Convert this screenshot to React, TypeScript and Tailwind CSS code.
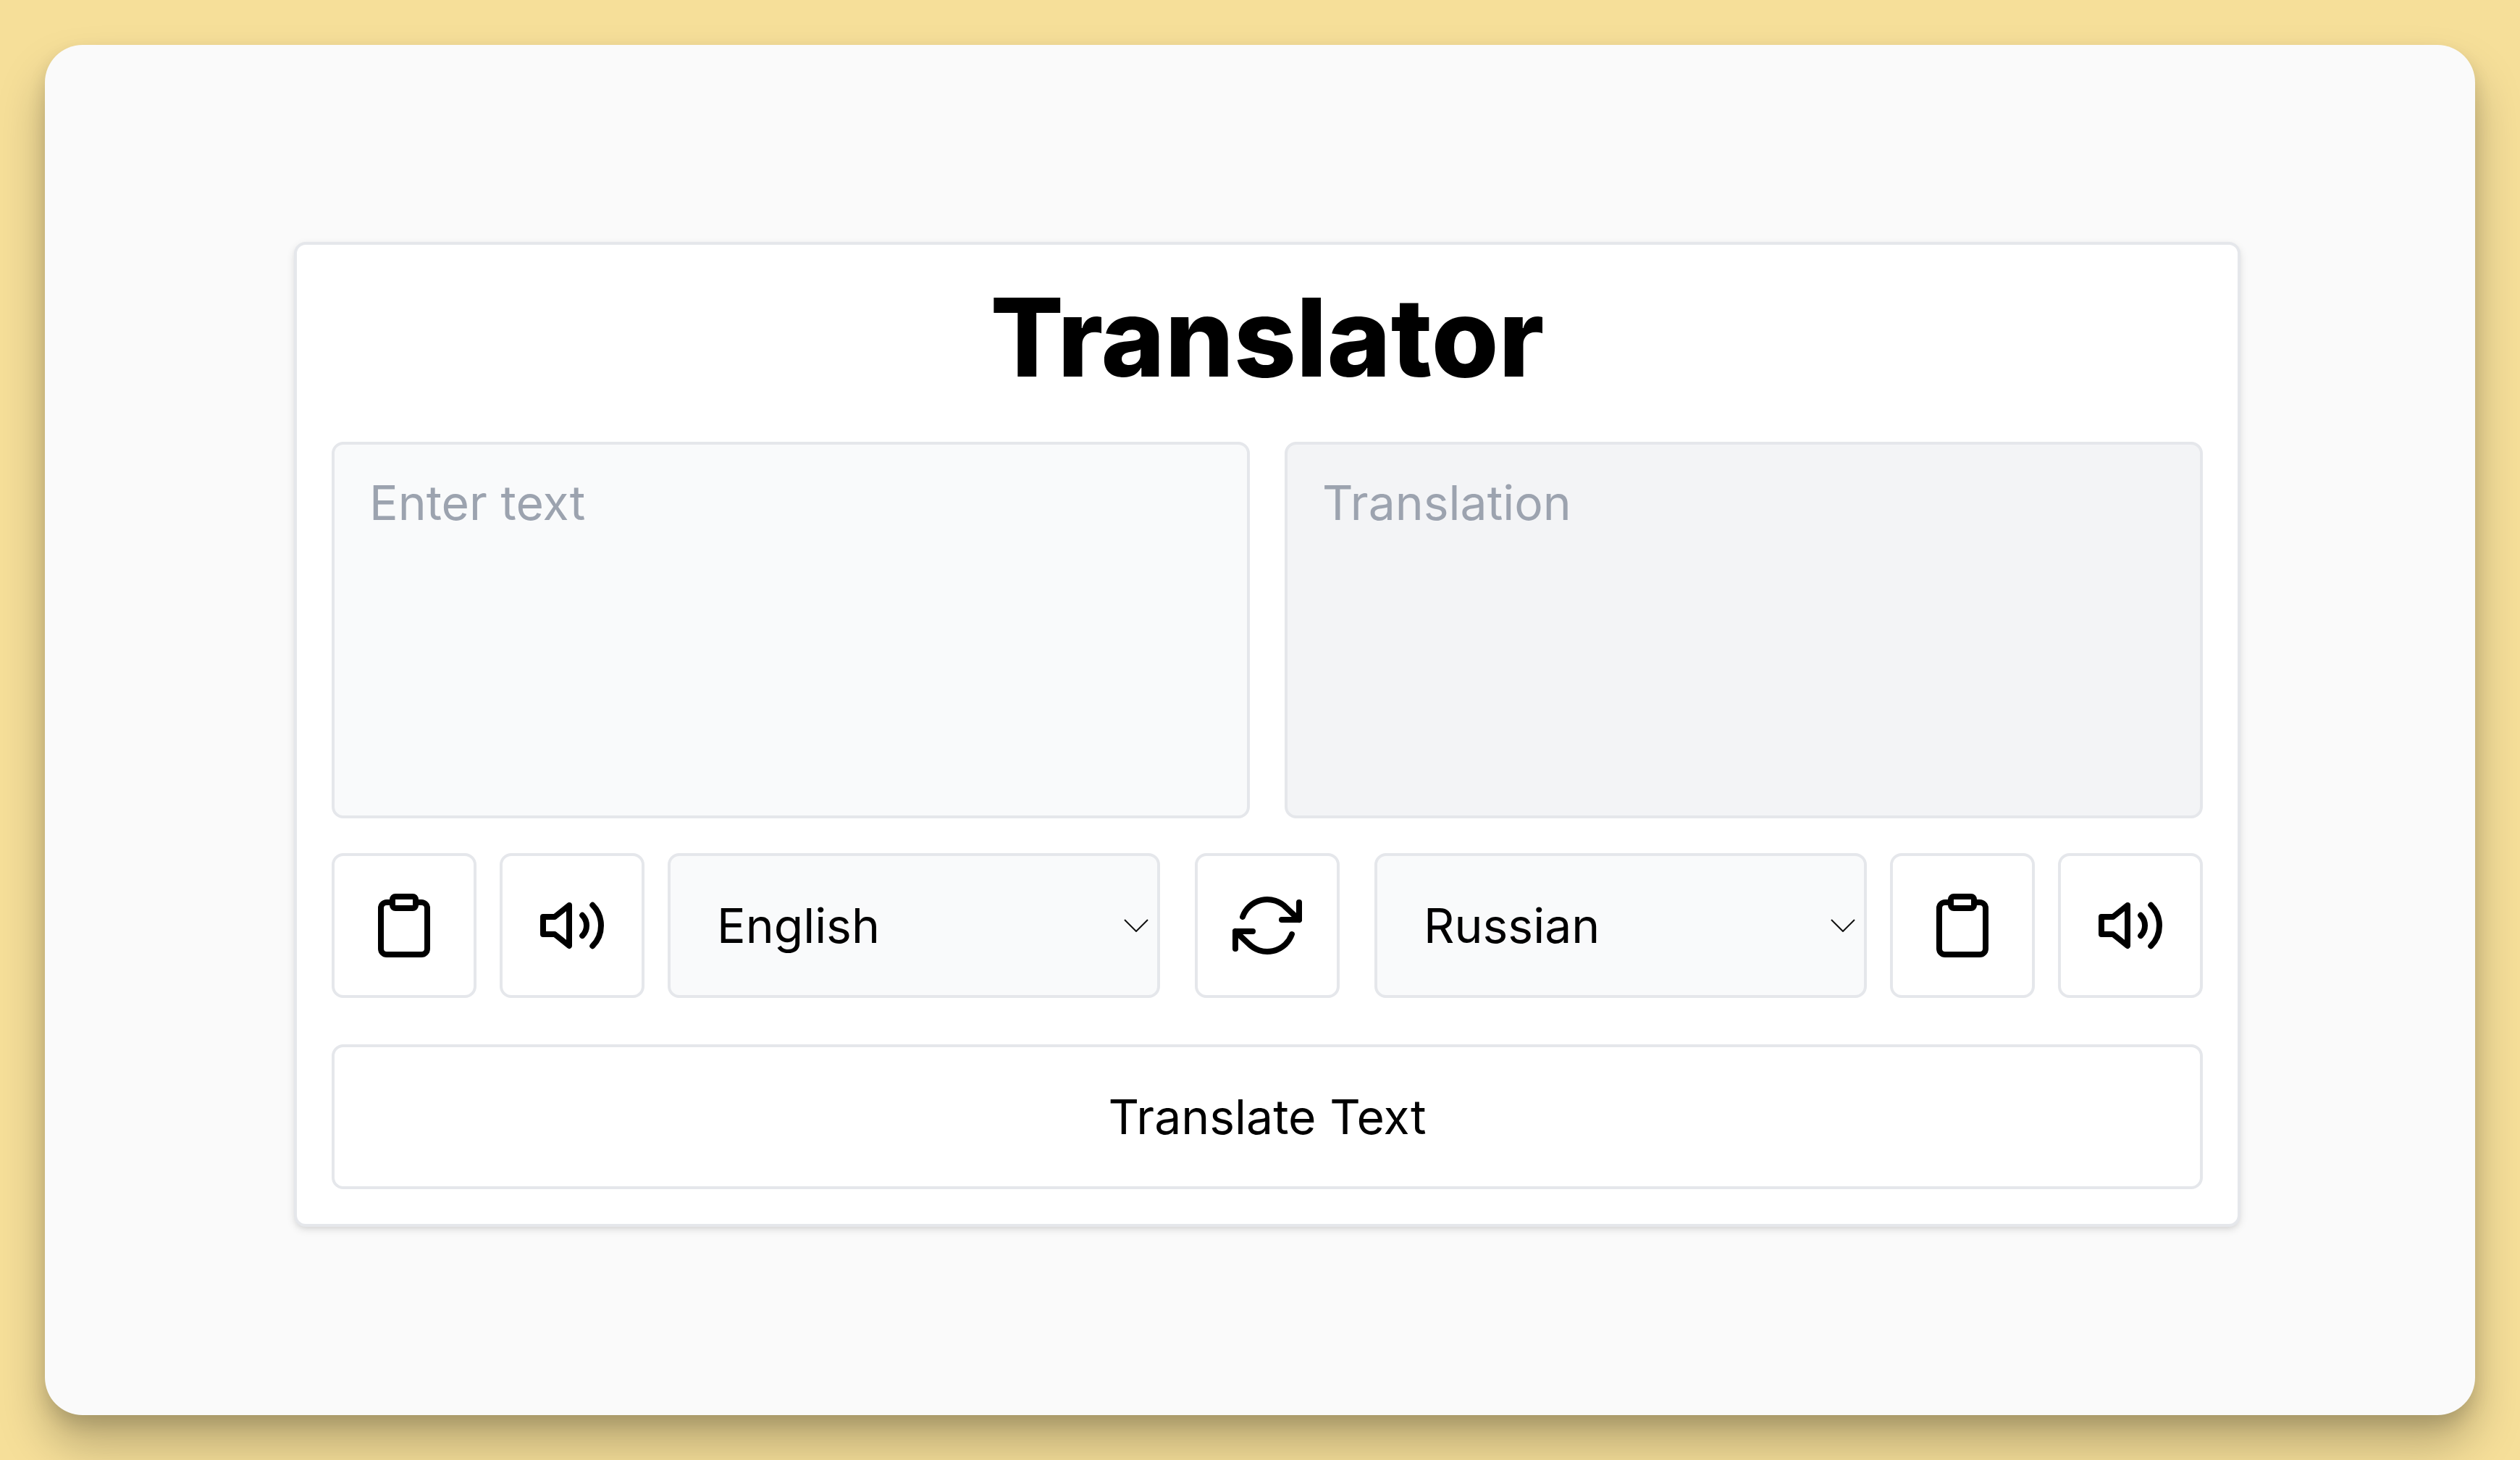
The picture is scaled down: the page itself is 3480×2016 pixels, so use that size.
import { useState } from "react";
import type { ReactNode } from "react";
import { FiClipboard, FiRefreshCw, FiVolume2 } from "react-icons/fi";

const LANGUAGES = ["English", "Russian", "Spanish", "German", "French"];

function IconButton({
  label,
  onClick,
  children,
}: {
  label: string;
  onClick?: () => void;
  children: ReactNode;
}) {
  return (
    <button
      type="button"
      aria-label={label}
      onClick={onClick}
      className="flex size-[200px] shrink-0 items-center justify-center rounded-2xl border-4 border-[#e5e7eb] bg-white"
    >
      {children}
    </button>
  );
}

function LanguageSelect({
  label,
  value,
  onChange,
}: {
  label: string;
  value: string;
  onChange: (value: string) => void;
}) {
  return (
    <div className="relative min-w-0 flex-1">
      <select
        aria-label={label}
        value={value}
        onChange={(event) => onChange(event.target.value)}
        className="h-[200px] w-full appearance-none rounded-2xl border-4 border-[#e5e7eb] bg-[#f9fafb] px-16 text-[66px] text-black"
      >
        {LANGUAGES.map((language) => (
          <option key={language}>{language}</option>
        ))}
      </select>
      <svg
        aria-hidden="true"
        viewBox="0 0 34 18"
        className="pointer-events-none absolute inset-y-0 right-4 my-auto h-[18px] w-[34px]"
        fill="none"
        stroke="#111"
        strokeWidth="2"
      >
        <path d="M1 1l16 16L33 1" />
      </svg>
    </div>
  );
}

export default function App() {
  const [source, setSource] = useState("English");
  const [target, setTarget] = useState("Russian");
  const [text, setText] = useState("");

  const swap = () => {
    setSource(target);
    setTarget(source);
  };

  return (
    <div className="flex min-h-screen bg-[#f6df99] p-[62px] font-['Inter',sans-serif] text-black">
      <main className="flex flex-1 items-center justify-center rounded-[52px] bg-[#fafafa] pt-3 pl-5 shadow-[0_40px_64px_rgba(0,0,0,0.25),0_12px_24px_rgba(0,0,0,0.12)]">
        <section className="w-full max-w-[2688px] rounded-2xl border-4 border-[#e5e7eb] bg-white p-12 shadow-[0_4px_12px_rgba(0,0,0,0.1),0_4px_8px_-4px_rgba(0,0,0,0.1)]">
          <h1 className="mb-16 text-center text-[150px] leading-[160px] font-extrabold">Translator</h1>

          <div className="grid grid-cols-2 gap-12">
            <textarea
              aria-label="Enter text"
              placeholder="Enter text"
              value={text}
              onChange={(event) => setText(event.target.value)}
              className="h-[520px] resize-none rounded-2xl border-4 border-[#e5e7eb] bg-[#f9fafb] px-12 py-8 text-[66px] leading-[96px] placeholder:text-[#9ca3af]"
            />
            <textarea
              aria-label="Translation"
              placeholder="Translation"
              readOnly
              className="h-[520px] resize-none rounded-2xl border-4 border-[#e5e7eb] bg-[#f3f4f6] px-12 py-8 text-[66px] leading-[96px] placeholder:text-[#9ca3af]"
            />
          </div>

          <div className="mt-12 flex gap-12">
            <div className="flex min-w-0 flex-1 gap-8">
              <IconButton label="Copy source text">
                <FiClipboard className="size-24" />
              </IconButton>
              <IconButton label="Listen to source text">
                <FiVolume2 className="size-24" />
              </IconButton>
              <LanguageSelect label="Source language" value={source} onChange={setSource} />
            </div>
            <IconButton label="Swap languages" onClick={swap}>
              <FiRefreshCw className="size-24" />
            </IconButton>
            <div className="flex min-w-0 flex-1 gap-8">
              <LanguageSelect label="Target language" value={target} onChange={setTarget} />
              <IconButton label="Copy translation">
                <FiClipboard className="size-24" />
              </IconButton>
              <IconButton label="Listen to translation">
                <FiVolume2 className="size-24" />
              </IconButton>
            </div>
          </div>

          <button
            type="button"
            className="mt-16 h-[200px] w-full rounded-2xl border-4 border-[#e5e7eb] bg-white text-[66px]"
          >
            Translate Text
          </button>
        </section>
      </main>
    </div>
  );
}
